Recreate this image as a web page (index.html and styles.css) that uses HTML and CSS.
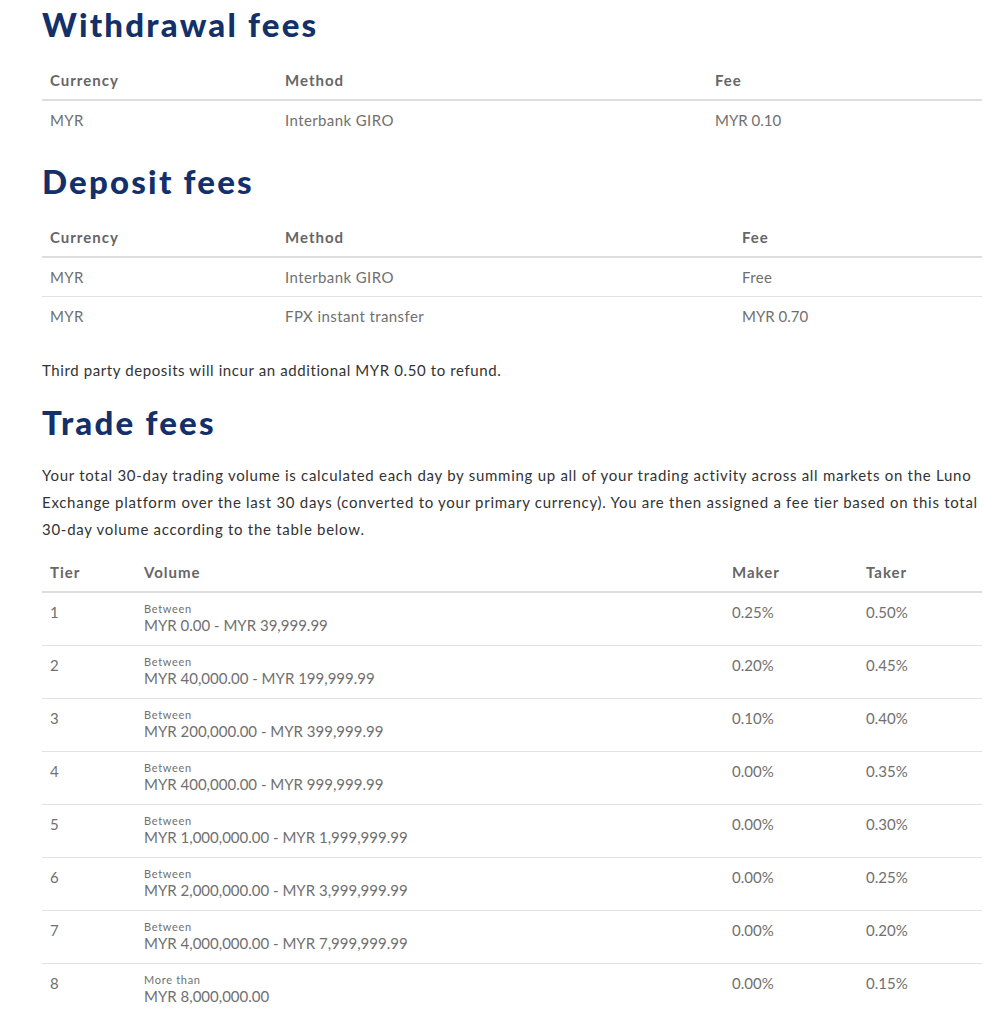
FILE: index.html
```html
<!DOCTYPE html>
<html>
<head>
<meta charset="utf-8">
<link rel="stylesheet" href="styles.css">
</head>
<body>
<main class="page">
  <h2 class="title">Withdrawal fees</h2>
  <table class="fees fees-withdraw">
    <colgroup><col class="c-cur"><col class="c-wmethod"><col></colgroup>
    <thead><tr><th>Currency</th><th>Method</th><th>Fee</th></tr></thead>
    <tbody><tr><td>MYR</td><td>Interbank GIRO</td><td class="num">MYR 0.10</td></tr></tbody>
  </table>

  <h2 class="title">Deposit fees</h2>
  <table class="fees fees-deposit">
    <colgroup><col class="c-cur"><col class="c-dmethod"><col></colgroup>
    <thead><tr><th>Currency</th><th>Method</th><th>Fee</th></tr></thead>
    <tbody>
      <tr><td>MYR</td><td>Interbank GIRO</td><td>Free</td></tr>
      <tr><td>MYR</td><td>FPX instant transfer</td><td class="num">MYR 0.70</td></tr>
    </tbody>
  </table>
  <p class="note">Third party deposits will incur an additional MYR 0.50 to refund.</p>

  <h2 class="title">Trade fees</h2>
  <p class="intro">Your total 30-day trading volume is calculated each day by summing up all of your trading activity across all markets on the Luno Exchange platform over the last 30 days (converted to your primary currency). You are then assigned a fee tier based on this total 30-day volume according to the table below.</p>
  <table class="fees fees-trade">
    <colgroup><col class="c-tier"><col class="c-vol"><col class="c-maker"><col></colgroup>
    <thead><tr><th>Tier</th><th>Volume</th><th>Maker</th><th>Taker</th></tr></thead>
    <tbody>
      <tr><td>1</td><td class="vol"><span class="lbl">Between</span><span class="val">MYR 0.00 - MYR 39,999.99</span></td><td class="num">0.25%</td><td class="num">0.50%</td></tr>
      <tr><td>2</td><td class="vol"><span class="lbl">Between</span><span class="val">MYR 40,000.00 - MYR 199,999.99</span></td><td class="num">0.20%</td><td class="num">0.45%</td></tr>
      <tr><td>3</td><td class="vol"><span class="lbl">Between</span><span class="val">MYR 200,000.00 - MYR 399,999.99</span></td><td class="num">0.10%</td><td class="num">0.40%</td></tr>
      <tr><td>4</td><td class="vol"><span class="lbl">Between</span><span class="val">MYR 400,000.00 - MYR 999,999.99</span></td><td class="num">0.00%</td><td class="num">0.35%</td></tr>
      <tr><td>5</td><td class="vol"><span class="lbl">Between</span><span class="val">MYR 1,000,000.00 - MYR 1,999,999.99</span></td><td class="num">0.00%</td><td class="num">0.30%</td></tr>
      <tr><td>6</td><td class="vol"><span class="lbl">Between</span><span class="val">MYR 2,000,000.00 - MYR 3,999,999.99</span></td><td class="num">0.00%</td><td class="num">0.25%</td></tr>
      <tr><td>7</td><td class="vol"><span class="lbl">Between</span><span class="val">MYR 4,000,000.00 - MYR 7,999,999.99</span></td><td class="num">0.00%</td><td class="num">0.20%</td></tr>
      <tr><td>8</td><td class="vol"><span class="lbl">More than</span><span class="val">MYR 8,000,000.00</span></td><td class="num">0.00%</td><td class="num">0.15%</td></tr>
    </tbody>
  </table>
</main>
</body>
</html>
```

FILE: styles.css
```css
html, body {
  margin: 0;
  padding: 0;
  background: #fff;
}
body {
  font-family: Lato, "Liberation Sans", sans-serif;
  font-size: 15px;
  color: #333;
}
.page {
  width: 940px;
  margin-left: 42px;
  padding-top: 4px;
}
.title {
  margin: 0 0 16px;
  font-size: 33px;
  line-height: 40px;
  font-weight: 900;
  letter-spacing: 2.2px;
  color: #13306a;
}
.fees {
  width: 100%;
  border-collapse: collapse;
  table-layout: fixed;
  margin-bottom: 22px;
}
.fees th {
  text-align: left;
  font-weight: 700;
  color: #666;
  padding: 11px 8px 10px;
  line-height: 18px;
  letter-spacing: 1px;
  border-bottom: 2px solid #dedede;
}
.fees td {
  text-align: left;
  vertical-align: top;
  color: #707070;
  padding: 10px 8px;
  line-height: 18px;
  letter-spacing: 0.4px;
}
.fees td.num {
  letter-spacing: 0;
}
.fees tbody tr + tr td {
  border-top: 1px solid #e2e2e2;
}
.c-cur { width: 235px; }
.c-wmethod { width: 430px; }
.c-dmethod { width: 457px; }
.c-tier { width: 94px; }
.c-vol { width: 588px; }
.c-maker { width: 134px; }
.fees-trade td {
  padding: 10px 8px 9px;
}
.fees-trade td.vol {
  padding: 8px 8px 11px;
}
.lbl {
  display: block;
  font-size: 11px;
  line-height: 15px;
  letter-spacing: 0.7px;
}
.val {
  display: block;
  font-size: 15px;
  line-height: 18px;
  letter-spacing: 0;
}
.note {
  margin: 0 0 18px;
  line-height: 27px;
  letter-spacing: 0.6px;
  color: #333;
}
.intro {
  margin: 20px 0 9px;
  line-height: 27px;
  letter-spacing: 0.72px;
  color: #333;
}
```
